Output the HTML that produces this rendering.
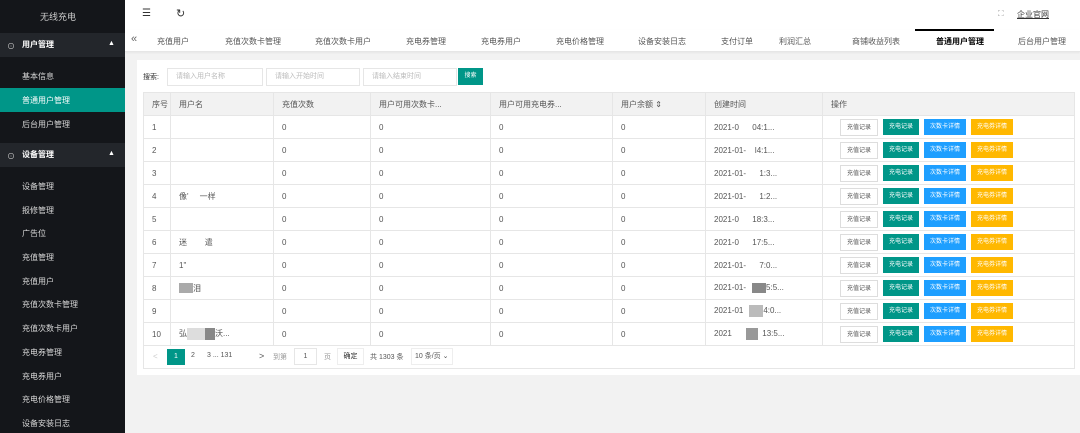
<!DOCTYPE html><html><head><meta charset="utf-8"><style>
*{margin:0;padding:0;box-sizing:border-box}
body{width:1080px;height:433px;overflow:hidden;background:#f2f2f2;font-family:"Liberation Sans","Noto Sans CJK SC",sans-serif;font-size:8px;color:#555;position:relative}
.a{position:absolute;white-space:nowrap}
#side{position:absolute;left:0;top:0;width:125px;height:433px;background:#14161a}
.sh{position:absolute;left:0;width:125px;height:24px;background:#23262b;color:#fff;font-weight:bold;font-size:8px;line-height:24px;padding-left:22px}
.si{position:absolute;left:22px;color:#d8d8d8;font-size:8px}
#top{position:absolute;left:125px;top:0;width:955px;height:30px;background:#fff}
#tabs{position:absolute;left:125px;top:30px;width:955px;height:22px;background:#fff;border-bottom:1px solid #e6e6e6;box-shadow:0 1px 2px rgba(0,0,0,.05)}
.tab{position:absolute;top:36px;font-size:8px;color:#555}
.card{position:absolute;left:137px;top:60px;width:945px;height:315px;background:#fff}
table{position:absolute;left:143px;top:92px;border-collapse:collapse;width:932px}
td,th{border:1px solid #e6e6e6;height:23px;font-weight:normal;text-align:left;padding-left:8px;font-size:8px;color:#555}
th{background:#f2f2f2}
.b{display:inline-block;height:16px;line-height:16px;padding:0 6px;font-size:6px;color:#fff;margin-right:5px;vertical-align:middle}
.in{position:absolute;top:68px;height:18px;border:1px solid #e6e6e6;font-size:7px;color:#bbb;line-height:16px;padding-left:8px}
</style></head><body>
<div id="side">
<div class="a" style="left:40px;top:10px;color:#ccc;font-size:9px">无线充电</div>
<div class="sh" style="top:33px">用户管理</div>
<div class="a" style="left:7px;top:41px;color:#ccc;font-size:8px">⊙</div>
<div class="a" style="left:108px;top:40px;color:#fff;font-size:7px">▲</div>
<div class="si" style="top:71px">基本信息</div>
<div style="position:absolute;top:88px;left:0;width:125px;height:24px;background:#009688"></div>
<div class="si" style="top:95px;color:#fff">普通用户管理</div>
<div class="si" style="top:119px">后台用户管理</div>
<div class="sh" style="top:143px">设备管理</div>
<div class="a" style="left:7px;top:151px;color:#ccc;font-size:8px">⊙</div>
<div class="a" style="left:108px;top:150px;color:#fff;font-size:7px">▲</div>
<div class="si" style="top:181px">设备管理</div>
<div class="si" style="top:205px">报修管理</div>
<div class="si" style="top:228px">广告位</div>
<div class="si" style="top:252px">充值管理</div>
<div class="si" style="top:276px">充值用户</div>
<div class="si" style="top:299px">充值次数卡管理</div>
<div class="si" style="top:323px">充值次数卡用户</div>
<div class="si" style="top:347px">充电券管理</div>
<div class="si" style="top:371px">充电券用户</div>
<div class="si" style="top:394px">充电价格管理</div>
<div class="si" style="top:418px">设备安装日志</div>
</div>
<div id="top"></div>
<div class="a" style="left:142px;top:8px;font-size:10px;color:#333">☰</div>
<div class="a" style="left:176px;top:7px;font-size:11px;color:#333">↻</div>
<div class="a" style="left:998px;top:9px;font-size:8px;color:#999">⛶</div>
<div class="a" style="left:1017px;top:9px;font-size:8px;color:#333;text-decoration:underline">企业官网</div>
<div id="tabs"></div>
<div style="position:absolute;left:915px;top:29px;width:79px;height:2px;background:#000"></div>
<div class="a" style="left:131px;top:33px;font-size:11px;color:#666">«</div>
<div class="tab" style="left:157px">充值用户</div>
<div class="tab" style="left:225px">充值次数卡管理</div>
<div class="tab" style="left:315px">充值次数卡用户</div>
<div class="tab" style="left:406px">充电券管理</div>
<div class="tab" style="left:481px">充电券用户</div>
<div class="tab" style="left:556px">充电价格管理</div>
<div class="tab" style="left:638px">设备安装日志</div>
<div class="tab" style="left:721px">支付订单</div>
<div class="tab" style="left:779px">利润汇总</div>
<div class="tab" style="left:852px">商铺收益列表</div>
<div class="tab" style="left:936px;color:#000;font-weight:bold">普通用户管理</div>
<div class="tab" style="left:1018px">后台用户管理</div>
<div class="card"></div>
<div class="a" style="left:143px;top:72px;font-size:7px;color:#333">搜索:</div>
<div class="in" style="left:167px;width:96px">请输入用户名称</div>
<div class="in" style="left:266px;width:94px">请输入开始时间</div>
<div class="in" style="left:363px;width:94px">请输入结束时间</div>
<div class="a" style="left:458px;top:68px;width:25px;height:17px;background:#009688;color:#fff;font-size:6px;line-height:17px;text-align:center">搜索</div>
<table>
<tr><th style="width:27px">序号</th><th style="width:103px">用户名</th><th style="width:97px">充值次数</th><th style="width:120px">用户可用次数卡...</th><th style="width:122px">用户可用充电券...</th><th style="width:93px">用户余额 ⇕</th><th style="width:117px">创建时间</th><th>操作</th></tr>
<tr><td>1</td><td></td><td>0</td><td>0</td><td>0</td><td>0</td><td>2021-0&nbsp;&nbsp;&nbsp;&nbsp;&nbsp;&nbsp;04:1...</td><td class="op"></td></tr>
<tr><td>2</td><td></td><td>0</td><td>0</td><td>0</td><td>0</td><td>2021-01-&nbsp;&nbsp;&nbsp;&nbsp;l4:1...</td><td class="op"></td></tr>
<tr><td>3</td><td></td><td>0</td><td>0</td><td>0</td><td>0</td><td>2021-01-&nbsp;&nbsp;&nbsp;&nbsp;&nbsp;&nbsp;1:3...</td><td class="op"></td></tr>
<tr><td>4</td><td>像'&nbsp;&nbsp;&nbsp;&nbsp;&nbsp;一样</td><td>0</td><td>0</td><td>0</td><td>0</td><td>2021-01-&nbsp;&nbsp;&nbsp;&nbsp;&nbsp;&nbsp;1:2...</td><td class="op"></td></tr>
<tr><td>5</td><td></td><td>0</td><td>0</td><td>0</td><td>0</td><td>2021-0&nbsp;&nbsp;&nbsp;&nbsp;&nbsp;&nbsp;18:3...</td><td class="op"></td></tr>
<tr><td>6</td><td>迷&nbsp;&nbsp;&nbsp;&nbsp;&nbsp;&nbsp;&nbsp;&nbsp;遣</td><td>0</td><td>0</td><td>0</td><td>0</td><td>2021-0&nbsp;&nbsp;&nbsp;&nbsp;&nbsp;&nbsp;17:5...</td><td class="op"></td></tr>
<tr><td>7</td><td>1"</td><td>0</td><td>0</td><td>0</td><td>0</td><td>2021-01-&nbsp;&nbsp;&nbsp;&nbsp;&nbsp;&nbsp;7:0...</td><td class="op"></td></tr>
<tr><td>8</td><td><span style="display:inline-block;width:14px;height:10px;background:#aaa;vertical-align:middle"></span>泪</td><td>0</td><td>0</td><td>0</td><td>0</td><td>2021-01-<span style="display:inline-block;width:14px;height:10px;background:#888;vertical-align:middle;margin-left:6px"></span>5:5...</td><td class="op"></td></tr>
<tr><td>9</td><td></td><td>0</td><td>0</td><td>0</td><td>0</td><td>2021-01<span style="display:inline-block;width:14px;height:12px;background:#bbb;vertical-align:middle;margin-left:6px"></span>4:0...</td><td class="op"></td></tr>
<tr><td>10</td><td>弘<span style="display:inline-block;width:18px;height:12px;background:#ddd;vertical-align:middle"></span><span style="display:inline-block;width:10px;height:12px;background:#888;vertical-align:middle"></span>沃...</td><td>0</td><td>0</td><td>0</td><td>0</td><td>2021<span style="display:inline-block;width:12px;height:12px;background:#999;vertical-align:middle;margin-left:14px"></span>&nbsp;&nbsp;13:5...</td><td class="op"></td></tr>
</table>
<div style="position:absolute;left:143px;top:345px;width:932px;height:24px;border:1px solid #e6e6e6;border-top:none"></div>
<div class="a" style="left:153px;top:352px;color:#ccc">&lt;</div>
<div class="a" style="left:167px;top:349px;width:18px;height:16px;background:#009688;color:#fff;text-align:center;line-height:16px;font-size:7px">1</div>
<div class="a" style="left:191px;top:352px;font-size:7px">2</div>
<div class="a" style="left:207px;top:352px;font-size:7px">3 ... 131</div>
<div class="a" style="left:259px;top:351px;font-size:9px;color:#555">&gt;</div>
<div class="a" style="left:273px;top:352px;font-size:7px;color:#999">到第</div>
<div class="a" style="left:294px;top:348px;width:23px;height:17px;border:1px solid #e6e6e6;text-align:center;line-height:15px;font-size:7px">1</div>
<div class="a" style="left:324px;top:352px;font-size:7px;color:#999">页</div>
<div class="a" style="left:337px;top:348px;width:27px;height:17px;border:1px solid #eee;text-align:center;line-height:15px;font-size:7px;color:#333">确定</div>
<div class="a" style="left:370px;top:352px;font-size:7px">共 1303 条</div>
<div class="a" style="left:411px;top:348px;width:42px;height:17px;border:1px solid #eee;line-height:15px;font-size:7px;padding-left:3px">10 条/页 ⌄</div>
<script>
document.querySelectorAll('.op').forEach(function(t){t.style.paddingLeft='17px';t.innerHTML='<span class="b" style="background:#fff;color:#555;border:1px solid #ddd;height:17px">充值记录</span><span class="b" style="background:#009688">充电记录</span><span class="b" style="background:#1e9fff">次数卡详情</span><span class="b" style="background:#ffb800">充电券详情</span>';});
</script>
</body></html>
